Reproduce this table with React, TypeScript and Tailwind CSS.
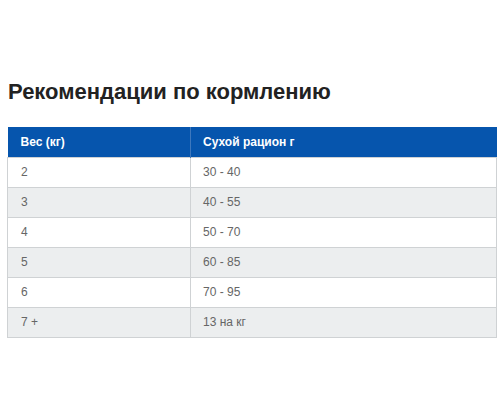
const rows = [
  ["2", "30 - 40"],
  ["3", "40 - 55"],
  ["4", "50 - 70"],
  ["5", "60 - 85"],
  ["6", "70 - 95"],
  ["7 +", "13 на кг"],
];

export default function App() {
  return (
    <div className="w-[500px] h-[420px] bg-white pt-[78px] pl-[7px] pr-[3px] font-['Liberation_Sans',Arial,sans-serif]">
      <h2 className="pl-px text-[22px] leading-[28px] font-bold text-[#222]">Рекомендации по кормлению</h2>
      <table className="mt-[21px] w-full border-collapse text-[12px]">
        <thead>
          <tr className="bg-[#0655ad] text-white">
            <th className="h-[30px] w-[183px] border-r border-[#3e78bd] pl-[13px] text-left font-bold">Вес (кг)</th>
            <th className="h-[30px] pl-[12px] text-left font-bold">Сухой рацион г</th>
          </tr>
        </thead>
        <tbody>
          {rows.map(([w, g], i) => (
            <tr key={w} className={i % 2 === 1 ? "bg-[#eceeef]" : "bg-white"}>
              <td className="h-[30px] border border-[#cfd2d4] pl-[13px] text-[#666]">{w}</td>
              <td className="h-[30px] border border-[#cfd2d4] pl-[12px] text-[#666]">{g}</td>
            </tr>
          ))}
        </tbody>
      </table>
    </div>
  );
}
